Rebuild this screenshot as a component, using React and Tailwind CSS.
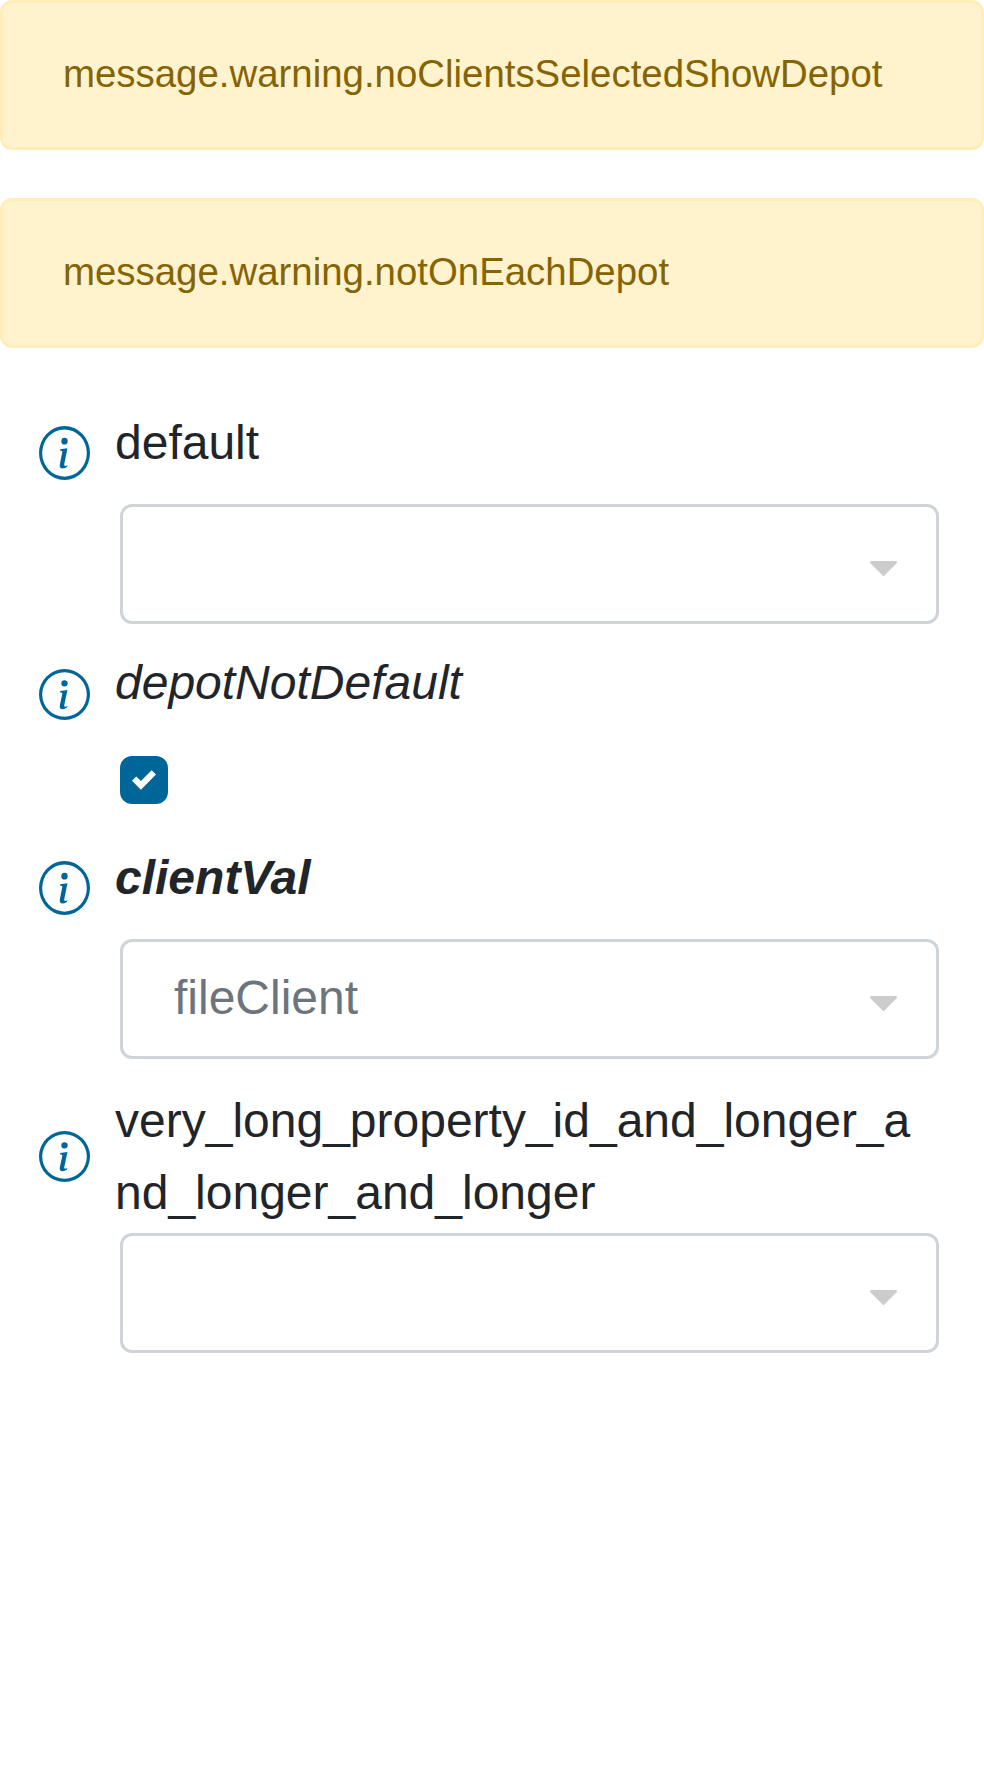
import React from "react";

function Alert({ children }) {
  return (
    <div
      role="alert"
      className="flex h-[150px] items-center rounded-[12px] border-[3px] border-[#ffeeba] bg-[#fff3cd] px-[60px] pb-[2px] text-[38.4px] leading-[57.6px] text-[#856404]"
    >
      {children}
    </div>
  );
}

function InfoIcon({ className }) {
  return (
    <svg
      viewBox="0 0 16 16"
      preserveAspectRatio="none"
      fill="#006699"
      className={`w-[51px] shrink-0 ${className}`}
    >
      <path d="M8 15A7 7 0 1 1 8 1a7 7 0 0 1 0 14m0 1A8 8 0 1 0 8 0a8 8 0 0 0 0 16" />
      <path d="m8.93 6.588-2.29.287-.082.38.45.083c.294.07.352.176.288.469l-.738 3.468c-.194.897.105 1.319.808 1.319.545 0 1.178-.252 1.465-.598l.088-.416c-.2.176-.492.246-.686.246-.275 0-.375-.193-.304-.533zM9 4.5a1 1 0 1 1-2 0 1 1 0 0 1 2 0" />
    </svg>
  );
}

function Field({ label, labelClass, iconClass, children }) {
  return (
    <div className="flex items-start pl-[39px] pr-[45px]">
      <InfoIcon className={iconClass} />
      <div className="ml-[25px] min-w-0 flex-1">
        <div className={`w-[800px] break-all text-[48px] leading-[72px] ${labelClass}`}>{label}</div>
        <div className="pl-[5px]">{children}</div>
      </div>
    </div>
  );
}

function SelectBox({ value }) {
  return (
    <div className="flex h-[120px] items-center justify-between rounded-[12px] border-[3px] border-[#ced4da] bg-white pl-[51px] pr-[39px]">
      <span className="pb-[2px] text-[48px] leading-[70px] text-[#6c757d]">{value}</span>
      <svg viewBox="0 0 27 15" fill="#cccccc" className="mt-[9px] h-[15px] w-[27px]">
        <path d="M1.3 0H25.7Q27 0 27 1.2Q27 1.9 26.4 2.5L14.4 14.4Q13.5 15.4 12.6 14.4L0.6 2.5Q0 1.9 0 1.2Q0 0 1.3 0Z" />
      </svg>
    </div>
  );
}

export default function App() {
  return (
    <div className="min-h-[1773px] w-[984px] bg-white font-['Liberation_Sans',Arial,sans-serif] text-[#212529]">
      <div className="flex flex-col gap-[48px]">
        <Alert>message.warning.noClientsSelectedShowDepot</Alert>
        <Alert>message.warning.notOnEachDepot</Alert>
      </div>
      <div className="pt-[59px]">
        <Field label="default" labelClass="mb-[25px]" iconClass="mt-[19px] h-[54px]">
          <SelectBox />
        </Field>
        <div className="pt-[23px]">
          <Field label="depotNotDefault" labelClass="mb-[37px] italic" iconClass="mt-[22px] h-[51px]">
            <div
              role="checkbox"
              aria-checked="true"
              className="flex h-[48px] w-[48px] items-center justify-center rounded-[12px] bg-[#006699]"
            >
              <svg viewBox="0 0 8 8" fill="#ffffff" className="h-[24px] w-[24px]">
                <path d="M6.564.75l-3.59 3.612-1.538-1.55L0 4.26l2.974 2.99L8 2.193z" />
              </svg>
            </div>
          </Field>
        </div>
        <div className="pt-[38px]">
          <Field label="clientVal" labelClass="mb-[25px] font-bold italic" iconClass="mt-[19px] h-[54px]">
            <SelectBox value="fileClient" />
          </Field>
        </div>
        <div className="pt-[26px]">
          <Field
            label="very_long_property_id_and_longer_and_longer_and_longer"
            labelClass="mb-[4px]"
            iconClass="mt-[46px] h-[51px]"
          >
            <SelectBox />
          </Field>
        </div>
      </div>
    </div>
  );
}
